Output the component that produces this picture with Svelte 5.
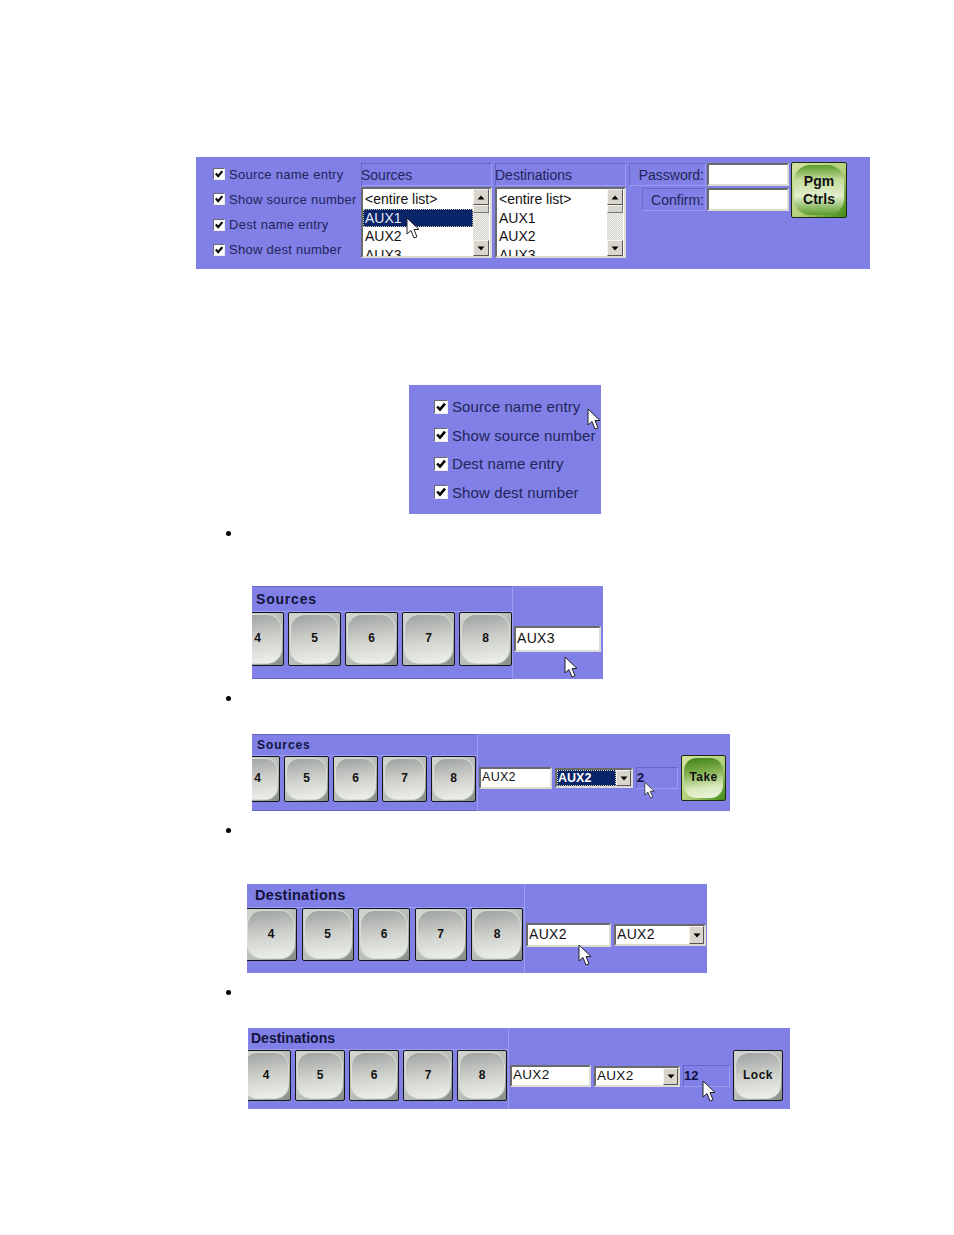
<script>
	const options = [
		{ label: 'Source name entry' },
		{ label: 'Show source number' },
		{ label: 'Dest name entry' },
		{ label: 'Show dest number' }
	];
	const listItems = ['<entire list>', 'AUX1', 'AUX2', 'AUX3'];
	const keys = [4, 5, 6, 7, 8];
</script>

{#snippet check(label)}
	<label class="option">
		<span class="box">
			<svg viewBox="0 0 12 12"><path d="M2.2 5.5 L5 8.6 L10 2.6" fill="none" stroke="#000" stroke-width="2.6" /></svg>
		</span>
		<span>{label}</span>
	</label>
{/snippet}

{#snippet cursor(name)}
	<svg class="cursor {name}" viewBox="0 0 14 23">
		<path d="M1 1 L1 17 L5 13.5 L8 21 L11 19.8 L8 12.5 L13 12.5 Z" fill="#fff" stroke="#222" stroke-width="1" stroke-linejoin="miter" />
	</svg>
{/snippet}

{#snippet arrowUp()}
	<svg viewBox="0 0 8 5"><path d="M4 0.5 L7.5 4.5 L0.5 4.5 Z" fill="#000" /></svg>
{/snippet}

{#snippet arrowDown()}
	<svg viewBox="0 0 8 5"><path d="M0.5 0.5 L7.5 0.5 L4 4.5 Z" fill="#000" /></svg>
{/snippet}

{#snippet listbox(selected)}
	<div class="listbox">
		<div class="items">
			{#each listItems as item}
				<div class="item" class:selected={selected && item === 'AUX1'}>{item}</div>
			{/each}
		</div>
		<div class="scrollbar">
			<div class="scrollBtn">{@render arrowUp()}</div>
			<div class="thumb"></div>
			<div class="track"></div>
			<div class="scrollBtn">{@render arrowDown()}</div>
		</div>
	</div>
{/snippet}

{#snippet keyStrip(title)}
	<div class="strip">
		<div class="stripTitle">{title}</div>
		<div class="keyRow">
			{#each keys as n}
				<div class="key"><span>{n}</span></div>
			{/each}
		</div>
	</div>
{/snippet}

{#snippet combo(active)}
	<div class="combo">
		<span class="comboText" class:active>AUX2</span>
		<span class="comboBtn">{@render arrowDown()}</span>
	</div>
{/snippet}

<div class="page">
	<section class="panel wide">
		<div class="optionList">
			{#each options as option}
				{@render check(option.label)}
			{/each}
		</div>
		<div class="listCol">
			<div class="listHead">Sources</div>
			{@render listbox(true)}
		</div>
		<div class="listCol">
			<div class="listHead">Destinations</div>
			{@render listbox(false)}
		</div>
		<div class="passCol">
			<div class="passRow">
				<span class="passLabel first">Password:</span>
				<span class="passInput"></span>
			</div>
			<div class="passRow">
				<span class="passLabel">Confirm:</span>
				<span class="passInput"></span>
			</div>
		</div>
		<div class="greenBtn pgm"><span>Pgm<br />Ctrls</span></div>
		{@render cursor('c1')}
	</section>

	<section class="panel optionsPanel">
		{#each options as option}
			{@render check(option.label)}
		{/each}
		{@render cursor('c2')}
	</section>

	<div class="bullet first"></div>

	<section class="panel strip3">
		{@render keyStrip('Sources')}
		<div class="field">AUX3</div>
		{@render cursor('c3')}
	</section>

	<div class="bullet"></div>

	<section class="panel strip4">
		{@render keyStrip('Sources')}
		<div class="field">AUX2</div>
		{@render combo(true)}
		<div class="numBox">2</div>
		<div class="greenBtn take"><span>Take</span></div>
		{@render cursor('c4')}
	</section>

	<div class="bullet tall"></div>

	<section class="panel strip5">
		{@render keyStrip('Destinations')}
		<div class="field">AUX2</div>
		{@render combo(false)}
		{@render cursor('c5')}
	</section>

	<div class="bullet"></div>

	<section class="panel strip6">
		{@render keyStrip('Destinations')}
		<div class="field">AUX2</div>
		{@render combo(false)}
		<div class="numBox">12</div>
		<div class="key lock"><span>Lock</span></div>
		{@render cursor('c6')}
	</section>
</div>

<style>
	:global(body) {
		margin: 0;
		background: #fff;
	}

	.page {
		width: 954px;
		height: 1235px;
		padding-top: 157px;
		box-sizing: border-box;
		font-family: 'Liberation Sans', Arial, sans-serif;
		color: #24245a;
		overflow: hidden;
	}

	.panel {
		position: relative;
		background: #8080e6;
		display: flex;
		box-sizing: border-box;
	}

	.cursor {
		position: absolute;
		width: 14px;
		height: 23px;
	}

	/* top panel */
	.wide {
		width: 674px;
		height: 112px;
		margin-left: 196px;
		padding: 6px 0 0 17px;
		align-items: flex-start;
	}

	.optionList {
		width: 148px;
		padding-top: 2px;
		display: flex;
		flex-direction: column;
		gap: 7.3px;
	}

	.option {
		display: flex;
		align-items: center;
		gap: 4px;
		height: 18px;
		font-size: 13px;
		letter-spacing: 0.27px;
		white-space: nowrap;
	}

	.box {
		width: 12px;
		height: 12px;
		flex-shrink: 0;
		background: #fff;
		border: 1px solid;
		border-color: #6a6a6a #ecece4 #ecece4 #6a6a6a;
		box-sizing: border-box;
		display: flex;
	}

	.box svg {
		width: 100%;
		height: 100%;
	}

	.listCol {
		width: 131px;
		margin-right: 3px;
	}

	.listHead {
		height: 23px;
		line-height: 23px;
		box-sizing: border-box;
		text-indent: -1px;
		font-size: 14px;
		border: 1px solid;
		border-color: #6464c4 #9c9cf0 #9c9cf0 #6464c4;
	}

	.listbox {
		display: flex;
		height: 71px;
		margin-top: 1px;
		box-sizing: border-box;
		background: #fff;
		border: 2px solid;
		border-color: #6a6a6a #dcdcd4 #dcdcd4 #6a6a6a;
		overflow: hidden;
	}

	.items {
		flex: 1;
		overflow: hidden;
		padding-top: 1px;
		color: #111;
		font-size: 14px;
	}

	.item {
		height: 18.6px;
		line-height: 18.6px;
		padding-left: 2px;
		white-space: nowrap;
	}

	.item.selected {
		background: #0a246a;
		color: #e8e8f4;
		outline: 1px dotted #c8c8a0;
		outline-offset: -1px;
	}

	.scrollbar {
		width: 16px;
		margin-right: 1px;
		display: flex;
		flex-direction: column;
	}

	.scrollBtn,
	.comboBtn {
		display: flex;
		align-items: center;
		justify-content: center;
		box-sizing: border-box;
		background: #d8d6cc;
		border: 1px solid;
		border-color: #f4f4ec #555 #555 #f4f4ec;
	}

	.scrollBtn {
		height: 16px;
		flex-shrink: 0;
	}

	.scrollBtn svg,
	.comboBtn svg {
		width: 8px;
		height: 5px;
	}

	.thumb {
		height: 8px;
		flex-shrink: 0;
		box-sizing: border-box;
		background: #d8d6cc;
		border: 1px solid;
		border-color: #f4f4ec #777 #777 #f4f4ec;
	}

	.track {
		flex: 1;
		background: repeating-conic-gradient(#cfcfc8 0 25%, #f4f4f0 0 50%) 0 0 / 2px 2px;
	}

	.passCol {
		width: 160px;
		display: flex;
		flex-direction: column;
		gap: 2px;
	}

	.passRow {
		display: flex;
		justify-content: flex-end;
		gap: 1px;
	}

	.passLabel {
		width: 64px;
		height: 23px;
		line-height: 23px;
		box-sizing: border-box;
		text-align: right;
		font-size: 14px;
		padding-right: 1px;
		white-space: nowrap;
		border: 1px solid;
		border-color: #6c6cca #9c9cf0 #9c9cf0 #6c6cca;
	}

	.passLabel.first {
		width: 77px;
	}

	.passInput {
		width: 82px;
		height: 23px;
		box-sizing: border-box;
		background: #fff;
		border: 2px solid;
		border-color: #6a6a6a #dcdcd4 #dcdcd4 #6a6a6a;
	}

	.greenBtn {
		position: relative;
		box-sizing: border-box;
		border: 1px solid #1c2c10;
		border-radius: 2px;
		background: linear-gradient(135deg, #d2e4a2, #b2d078 55%, #3f8a14);
		display: flex;
		align-items: center;
		justify-content: center;
		font-weight: bold;
		color: #111;
		padding: 4px;
	}

	.greenBtn span {
		position: relative;
		text-align: center;
	}

	.greenBtn::before {
		content: '';
		position: absolute;
		inset: 2px;
		border-radius: 32%;
		background: linear-gradient(172deg, #3d7f14, #7fae4c 35%, #d9e9bc 72%, #eef5df);
	}

	.pgm {
		width: 56px;
		height: 56px;
		margin: -1px 0 0 2px;
		font-size: 14px;
		line-height: 18px;
	}

	.pgm::before {
		background: linear-gradient(180deg, #5d9a2c, #c4dc9c 30%, #e2eecc 62%, #5c9c2c);
	}

	/* second panel */
	.optionsPanel {
		width: 192px;
		height: 129px;
		margin: 116px 0 0 409px;
		padding: 12.5px 0 0 25px;
		flex-direction: column;
		gap: 10.5px;
	}

	.optionsPanel .option {
		font-size: 15px;
		letter-spacing: 0.1px;
		height: 18px;
		gap: 4px;
	}

	.optionsPanel .box {
		width: 14px;
		height: 14px;
	}

	.bullet {
		width: 5px;
		height: 5px;
		border-radius: 50%;
		background: #000;
		margin: 17px 0 33px 226px;
	}

	.bullet.first {
		margin-bottom: 50px;
	}

	.bullet.tall {
		margin-bottom: 51px;
	}

	/* key strips */
	.strip {
		width: var(--strip);
		flex-shrink: 0;
		box-sizing: border-box;
		border-top: 1px solid #6464c4;
		border-bottom: 1px solid #6464c4;
		border-right: 1px solid #9c9cf0;
		height: 100%;
	}

	.stripTitle {
		height: var(--head);
		line-height: var(--head);
		padding-left: var(--titlePad);
		font-size: var(--titleSize);
		font-weight: bold;
		letter-spacing: var(--titleSpace);
		box-sizing: border-box;
		color: #14143c;
		border-bottom: 1px solid #9c9cf0;
	}

	.keyRow {
		display: flex;
		gap: var(--gap);
		overflow: hidden;
	}

	.key {
		position: relative;
		flex-shrink: 0;
		width: var(--key);
		height: var(--keyH);
		box-sizing: border-box;
		border: 1px solid #161616;
		border-radius: 2px;
		background: linear-gradient(135deg, #d4d6d2, #b8bcb8 55%, #868c86);
		display: flex;
		align-items: center;
		justify-content: center;
		padding-bottom: 2px;
		font-size: 12px;
		font-weight: bold;
		color: #111;
	}

	.key:first-child {
		margin-left: var(--shift);
	}

	.key::before {
		content: '';
		position: absolute;
		inset: 1px;
		border-radius: 30%;
		border: 1px solid #d8dcd6;
		background: linear-gradient(172deg, #9ea29e, #d0d2ce 52%, #eef1ec);
	}

	.key span {
		position: relative;
	}

	.field {
		flex-shrink: 0;
		box-sizing: border-box;
		background: #fff;
		border: 2px solid;
		border-color: #6a6a6a #dcdcd4 #dcdcd4 #6a6a6a;
		color: #111;
		padding-left: 1px;
		font-size: var(--fieldSize);
		line-height: calc(var(--fieldH) - 2px);
		height: calc(var(--fieldH) + 4px);
		width: var(--fieldW);
		margin: var(--fieldTop) 0 0 1px;
		letter-spacing: 0.3px;
	}

	.combo {
		flex-shrink: 0;
		display: flex;
		align-items: stretch;
		box-sizing: border-box;
		background: #fff;
		border: 2px solid;
		border-color: #6a6a6a #dcdcd4 #dcdcd4 #6a6a6a;
		width: var(--comboW);
		height: var(--comboH);
		margin: calc(var(--fieldTop) + 1px) 0 0 3px;
		color: #111;
		font-size: var(--fieldSize);
	}

	.comboText {
		flex: 1;
		padding-left: 1px;
		line-height: calc(var(--comboH) - 4px);
		letter-spacing: 0.3px;
	}

	.comboText.active {
		background: #0a246a;
		color: #fff;
		font-weight: bold;
		outline: 1px dotted #d8d8b0;
		outline-offset: -1px;
		letter-spacing: 0;
	}

	.comboBtn {
		width: 15px;
		flex-shrink: 0;
	}

	.numBox {
		flex-shrink: 0;
		box-sizing: border-box;
		border: 1px solid;
		border-color: #6464c4 #9c9cf0 #9c9cf0 #6464c4;
		font-size: 13px;
		font-weight: bold;
		color: #101040;
		width: var(--numW);
		height: calc(var(--fieldH) + 4px);
		line-height: calc(var(--fieldH) + 2px);
		margin: var(--fieldTop) 0 0 3px;
	}

	.strip3 {
		--strip: 261px;
		--head: 25px;
		--titlePad: 4px;
		--titleSize: 14px;
		--titleSpace: 0.8px;
		--gap: 4px;
		--key: 53px;
		--keyH: 54px;
		--shift: -21px;
		--fieldW: 87px;
		--fieldH: 22px;
		--fieldSize: 14px;
		--fieldTop: 40px;
		width: 351px;
		height: 93px;
		margin-left: 252px;
	}

	.strip4 {
		--strip: 226px;
		--head: 21px;
		--titlePad: 5px;
		--titleSize: 12px;
		--titleSpace: 0.9px;
		--gap: 4px;
		--key: 45px;
		--keyH: 46px;
		--shift: -17px;
		--fieldW: 73px;
		--fieldH: 18px;
		--fieldSize: 12.5px;
		--fieldTop: 33px;
		--comboW: 78px;
		--comboH: 20px;
		--numW: 42px;
		width: 478px;
		height: 77px;
		margin-left: 252px;
	}

	.strip4 .take {
		width: 45px;
		height: 46px;
		margin: 21px 0 0 3px;
		font-size: 12px;
		letter-spacing: 0.4px;
		padding-bottom: 6px;
	}

	.strip5 {
		--strip: 278px;
		--head: 24px;
		--titlePad: 8px;
		--titleSize: 14.5px;
		--titleSpace: 0.3px;
		--gap: 4.5px;
		--key: 52px;
		--keyH: 53px;
		--shift: -2px;
		--fieldW: 85px;
		--fieldH: 20px;
		--fieldSize: 14px;
		--fieldTop: 39px;
		--comboW: 92px;
		--comboH: 22px;
		width: 460px;
		height: 89px;
		margin-left: 247px;
	}

	.strip6 {
		--strip: 261px;
		--head: 22px;
		--titlePad: 3px;
		--titleSize: 14px;
		--titleSpace: 0;
		--gap: 4px;
		--key: 50px;
		--keyH: 51px;
		--shift: -7px;
		--fieldW: 81px;
		--fieldH: 18px;
		--fieldSize: 13.5px;
		--fieldTop: 37px;
		--comboW: 86px;
		--comboH: 21px;
		--numW: 47px;
		width: 542px;
		height: 81px;
		margin-left: 248px;
	}

	.strip5 .strip,
	.strip6 .strip {
		border-bottom: 0;
		border-top: 0;
	}

	.strip5 .stripTitle,
	.strip6 .stripTitle {
		line-height: calc(var(--head) - 2px);
	}

	.strip5 .comboText,
	.strip6 .comboText {
		line-height: calc(var(--comboH) - 6px);
	}

	.strip6 .lock {
		margin: 22px 0 0 3px;
		letter-spacing: 0.5px;
	}

	.c1 { left: 210px; top: 60px; }
	.c2 { left: 178px; top: 23px; }
	.c3 { left: 312px; top: 70px; }
	.c4 { left: 392px; top: 47px; width: 11px; height: 19px; }
	.c5 { left: 331px; top: 60px; }
	.c6 { left: 454px; top: 52px; }
</style>
